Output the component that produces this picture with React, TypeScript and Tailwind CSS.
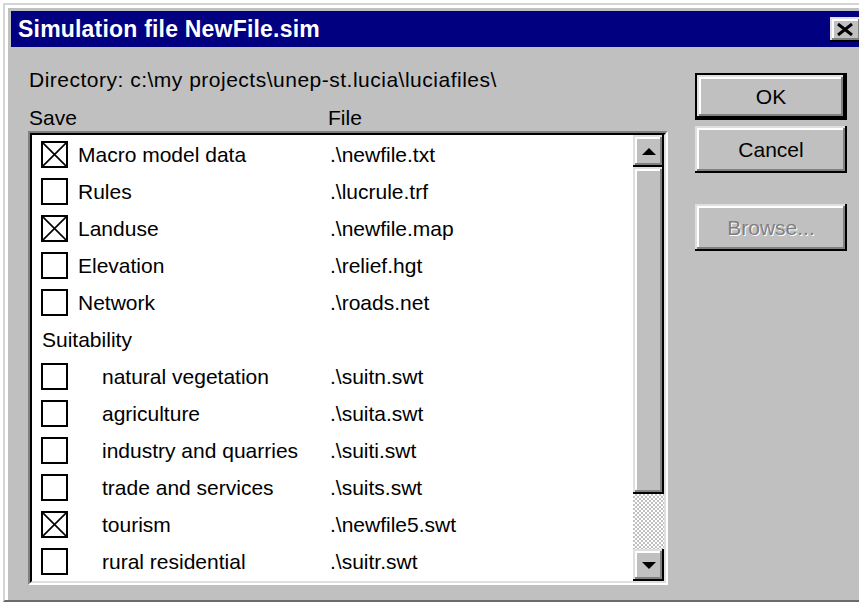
const raised =
  "shadow-[inset_-2px_-2px_0_#000,inset_2px_2px_0_#dfdfdf,inset_-4px_-4px_0_#808080,inset_4px_4px_0_#fff]";

type Entry = { name: string; file: string; checked?: boolean; indent?: boolean };

const main: Entry[] = [
  { name: "Macro model data", file: ".\\newfile.txt", checked: true },
  { name: "Rules", file: ".\\lucrule.trf" },
  { name: "Landuse", file: ".\\newfile.map", checked: true },
  { name: "Elevation", file: ".\\relief.hgt" },
  { name: "Network", file: ".\\roads.net" },
];

const suitability: Entry[] = [
  { name: "natural vegetation", file: ".\\suitn.swt", indent: true },
  { name: "agriculture", file: ".\\suita.swt", indent: true },
  { name: "industry and quarries", file: ".\\suiti.swt", indent: true },
  { name: "trade and services", file: ".\\suits.swt", indent: true },
  { name: "tourism", file: ".\\newfile5.swt", checked: true, indent: true },
  { name: "rural residential", file: ".\\suitr.swt", indent: true },
];

function CheckBox({ checked }: { checked?: boolean }) {
  return (
    <div className="w-[27px] h-[27px] border-2 border-black bg-white shrink-0">
      {checked && (
        <svg viewBox="0 0 23 23" className="w-full h-full">
          <path d="M0 0L23 23M23 0L0 23" stroke="#000" strokeWidth="1.6" />
        </svg>
      )}
    </div>
  );
}

function Row({ entry }: { entry: Entry }) {
  return (
    <div className="h-[37px] flex items-center pl-[9px]">
      <CheckBox checked={entry.checked} />
      <div className={`w-[262px] ${entry.indent ? "pl-[34px]" : "pl-[10px]"}`}>
        {entry.name}
      </div>
      <div>{entry.file}</div>
    </div>
  );
}

function Arrow({ up }: { up?: boolean }) {
  return (
    <svg width="14" height="7" viewBox="0 0 14 7">
      <path d={up ? "M7 0L14 7H0Z" : "M0 0H14L7 7Z"} fill="#000" />
    </svg>
  );
}

function ScrollBar() {
  return (
    <div className="w-[31px] flex flex-col shrink-0">
      <div className={`h-[32px] bg-[#c0c0c0] flex items-center justify-center ${raised}`}>
        <Arrow up />
      </div>
      <div className={`h-[327px] bg-[#c0c0c0] ${raised}`} />
      <div className="flex-1 bg-[image:repeating-conic-gradient(#c0c0c0_0_25%,#fff_0_50%)] bg-[length:4px_4px]" />
      <div className={`h-[32px] bg-[#c0c0c0] flex items-center justify-center ${raised}`}>
        <Arrow />
      </div>
    </div>
  );
}

function Button({ label, defaultBtn, disabled }: { label: string; defaultBtn?: boolean; disabled?: boolean }) {
  return (
    <div className={`h-[47px] ${defaultBtn ? "border-2 border-black" : ""}`}>
      <div
        className={`h-full bg-[#c0c0c0] flex items-center justify-center ${raised} ${
          disabled ? "text-[#808080] [text-shadow:1px_1px_0_#fff]" : ""
        }`}
      >
        {label}
      </div>
    </div>
  );
}

export default function App() {
  return (
    <div className="w-[859px] h-[602px] overflow-hidden bg-white pt-[3px] pl-[3px] font-['Liberation_Sans',Arial,sans-serif] text-[21px] leading-[24px] text-black">
      <div className="w-[880px] h-[599px] border-t-2 border-l-2 border-[#d4d4d4] border-b-2 border-b-[#6a6a6a]">
        <div className="h-full border-t-[3px] border-l-[3px] border-white bg-[#c0c0c0] pt-[3px] pl-[3px]">
          {/* title bar */}
          <div className="w-[851px] h-[36px] bg-[#000080] flex items-center justify-between pl-[7px]">
            <span className="text-white font-bold text-[23px] tracking-[0.2px]">Simulation file NewFile.sim</span>
            <div className={`w-[32px] h-[25px] bg-[#c0c0c0] flex items-center pl-[7px] ${raised}`}>
              <svg width="16" height="13" viewBox="0 0 16 13">
                <path d="M1 1L15 12M15 1L1 12" stroke="#000" strokeWidth="3" />
              </svg>
            </div>
          </div>

          {/* body */}
          <div className="flex pl-[17px] pt-[21px] gap-[27px]">
            <div className="w-[640px]">
              <div className="pl-px tracking-[0.5px]">Directory: c:\my projects\unep-st.lucia\luciafiles\</div>
              <div className="flex mt-[14px] pl-px">
                <span className="w-[299px]">Save</span>
                <span>File</span>
              </div>
              <div className="mt-px h-[454px] border-2 border-t-[#808080] border-l-[#808080] border-b-white border-r-white">
                <div className="h-full border-2 border-t-black border-l-black border-b-[#dfdfdf] border-r-[#dfdfdf] bg-white flex">
                  <div className="flex-1 pt-[1px]">
                    {main.map((e) => (
                      <Row key={e.name} entry={e} />
                    ))}
                    <div className="h-[37px] flex items-center pl-[10px]">Suitability</div>
                    {suitability.map((e) => (
                      <Row key={e.name} entry={e} />
                    ))}
                  </div>
                  <ScrollBar />
                </div>
              </div>
            </div>

            <div className="w-[152px] pt-[5px] flex flex-col">
              <Button label="OK" defaultBtn />
              <div className="mt-[6px]">
                <Button label="Cancel" />
              </div>
              <div className="mt-[31px]">
                <Button label="Browse..." disabled />
              </div>
            </div>
          </div>
        </div>
      </div>
    </div>
  );
}
